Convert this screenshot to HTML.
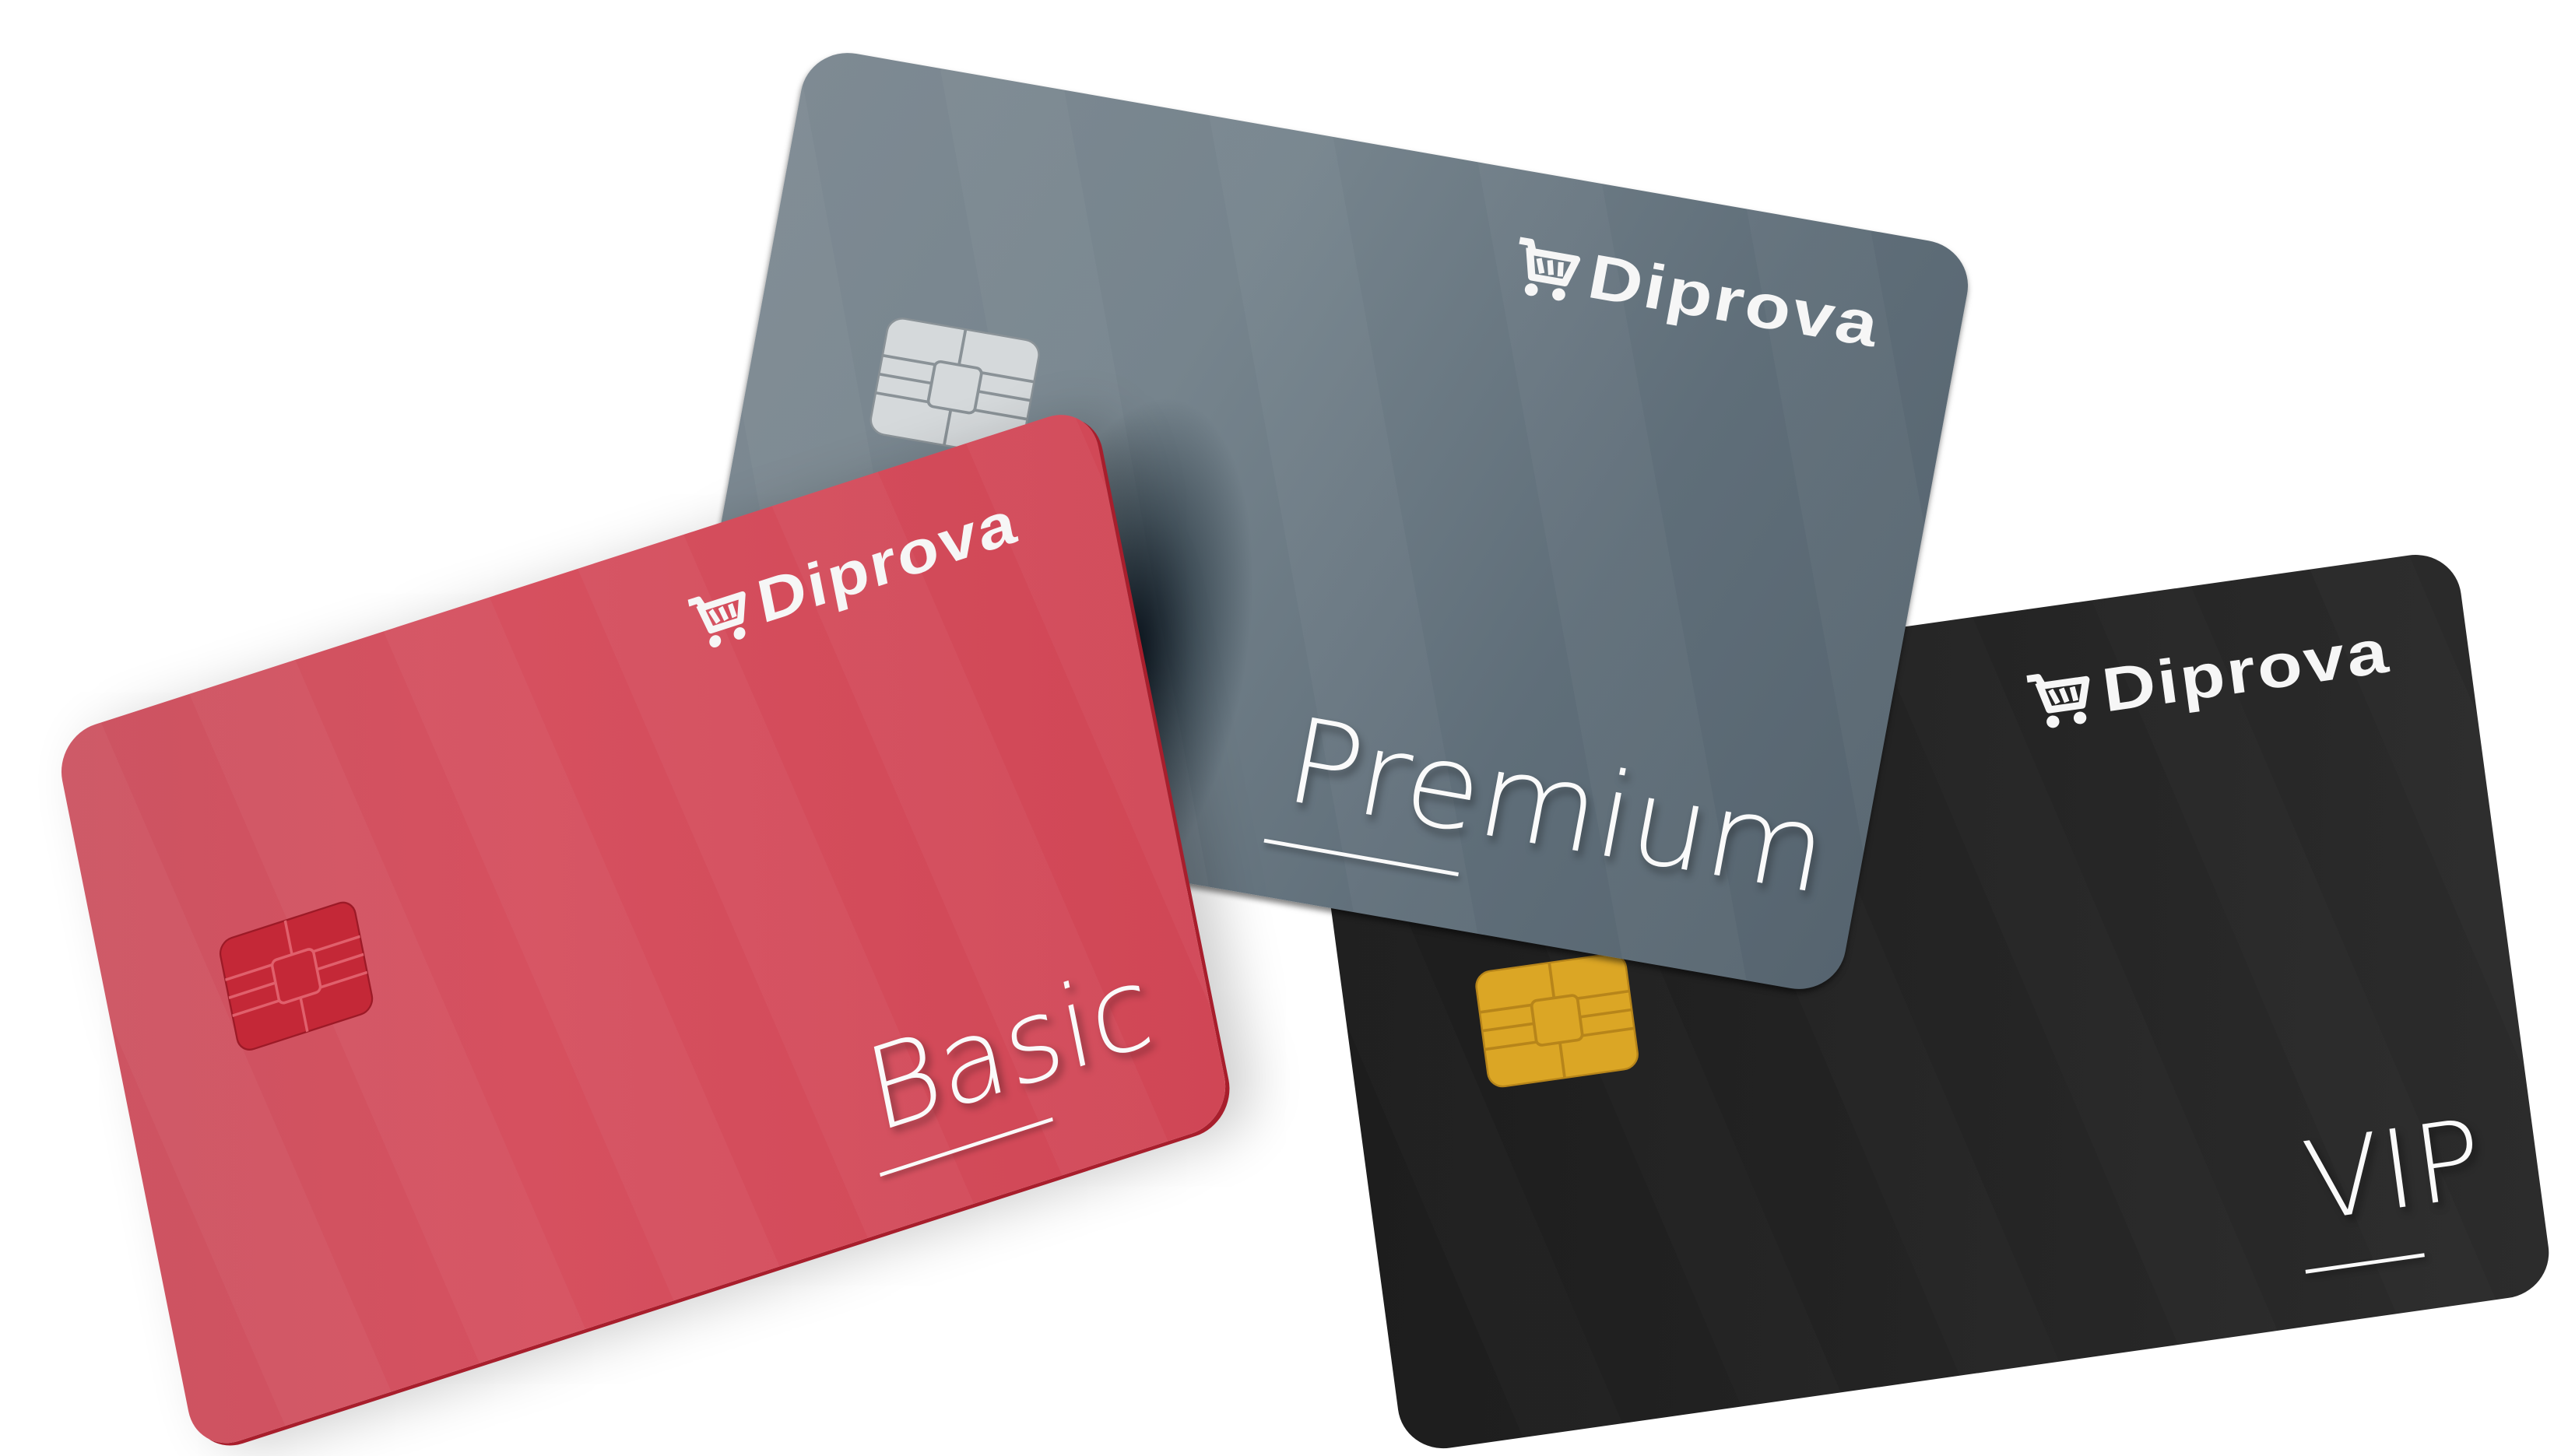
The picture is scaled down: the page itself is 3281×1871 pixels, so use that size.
<!DOCTYPE html>
<html><head><meta charset="utf-8"><style>
html,body{margin:0;padding:0;background:#fff;width:3281px;height:1871px;overflow:hidden}
#w{position:absolute;left:0;top:0;width:1568px;height:894px;transform-origin:0 0;transform:scale(2.0925,2.0928)}
.card{position:absolute;left:0;top:0;width:600px;height:400px;border-radius:24px;transform-origin:0 0;overflow:hidden}
.logo{position:absolute;left:370px;top:30px;width:200px;height:44px;color:#f6f6f6}
.logo svg{position:absolute;left:0;top:4px}
.logo span{position:absolute;left:40px;top:0px;font:bold 33px "Liberation Sans",sans-serif;letter-spacing:1px;transform:scaleX(1.15);transform-origin:0 0}
.chip{position:absolute}
.lab{position:absolute;font:36px "DejaVu Sans","Liberation Sans",sans-serif;font-weight:200;color:#fafafa;text-shadow:2px 3px 4px rgba(0,0,0,.35);white-space:nowrap}
.ul{position:absolute;height:2px;background:#fafafa;box-shadow:1px 2px 3px rgba(0,0,0,.3)}
</style></head><body><div id="w">

<!-- VIP -->
<div class="card" style="transform:matrix(1.177,-0.1667,0.1525,1.14,801,437);background:linear-gradient(100deg,#1c1c1c 0%,#222 40%,#2c2c2c 100%)">
  <div style="position:absolute;inset:0;background:repeating-linear-gradient(75deg,rgba(255,255,255,0) 0 60px,rgba(255,255,255,.015) 60px 110px)"></div>
  <div class="logo"><svg width="36" height="32" viewBox="0 0 38 34"><path d="M2 3h6l2 5h24l-4 14H12L8 6" fill="none" stroke="#f6f6f6" stroke-width="4" stroke-linejoin="round"/><path d="M14 11l3 8M20 11l2 8M26 11l1 8" stroke="#f6f6f6" stroke-width="3"/><circle cx="13" cy="29" r="3.5" fill="#f6f6f6"/><circle cx="28" cy="29" r="3.5" fill="#f6f6f6"/></svg><span>Diprova</span></div>
  <svg class="chip" style="left:68px;top:150px" width="80" height="64" viewBox="0 0 80 64"><rect x="1" y="1" width="78" height="62" rx="8" fill="#dba625" stroke="#b7851a"/><g stroke="#b7851a" stroke-width="1.5" fill="none"><rect x="28" y="20" width="24" height="24" rx="3"/><path d="M1 22h27M1 42h27M52 22h27M52 42h27M28 32H1M52 32h27M40 1v19M40 44v19"/></g></svg>
  <div class="lab" style="left:480px;top:290px;font-size:58px">VIP</div>
  <div class="ul" style="left:474px;top:370px;width:62px"></div>
</div>

<!-- Premium -->
<div class="card" style="transform:matrix(1.193,0.208,-0.2125,1.1475,497,28);background:linear-gradient(110deg,#7e8a93 0%,#76848d 35%,#5f6e79 70%,#56646f 100%);box-shadow:0 2px 3px rgba(0,0,0,.5)">
  <div style="position:absolute;inset:0;background:repeating-linear-gradient(70deg,rgba(255,255,255,0) 0 70px,rgba(255,255,255,.03) 70px 130px)"></div>
  <div style="position:absolute;inset:0;background:radial-gradient(ellipse 60px 140px at 215px 290px,rgba(0,10,20,.95),rgba(10,25,35,.45) 55%,rgba(0,0,0,0) 100%)"></div>
  <div class="logo"><svg width="36" height="32" viewBox="0 0 38 34"><path d="M2 3h6l2 5h24l-4 14H12L8 6" fill="none" stroke="#f6f6f6" stroke-width="4" stroke-linejoin="round"/><path d="M14 11l3 8M20 11l2 8M26 11l1 8" stroke="#f6f6f6" stroke-width="3"/><circle cx="13" cy="29" r="3.5" fill="#f6f6f6"/><circle cx="28" cy="29" r="3.5" fill="#f6f6f6"/></svg><span>Diprova</span></div>
  <svg class="chip" style="left:64px;top:132px" width="80" height="64" viewBox="0 0 80 64"><rect x="1" y="1" width="78" height="62" rx="8" fill="#d5d9db" stroke="#8a9297"/><g stroke="#8a9297" stroke-width="1.5" fill="none"><rect x="28" y="20" width="24" height="24" rx="3"/><path d="M1 22h27M1 42h27M52 22h27M52 42h27M28 32H1M52 32h27M40 1v19M40 44v19"/></g></svg>
  <div class="lab" style="left:305px;top:290px;font-size:62px">Premium</div>
  <div class="ul" style="left:300px;top:370px;width:100px"></div>
</div>

<!-- Basic -->
<div class="card" style="transform:matrix(1.06,-0.342,0.22,1.1,33,453);background:linear-gradient(100deg,#cc5462 0%,#d6505f 40%,#d04655 100%);box-shadow:2px 2px 0 #a81e2c,14px 6px 30px rgba(0,0,0,.2)">
  <div style="position:absolute;inset:0;background:repeating-linear-gradient(78deg,rgba(255,255,255,0) 0 50px,rgba(255,255,255,.035) 50px 110px)"></div>
  <div class="logo" style="left:358px"><svg width="36" height="32" viewBox="0 0 38 34"><path d="M2 3h6l2 5h24l-4 14H12L8 6" fill="none" stroke="#f6f6f6" stroke-width="4" stroke-linejoin="round"/><path d="M14 11l3 8M20 11l2 8M26 11l1 8" stroke="#f6f6f6" stroke-width="3"/><circle cx="13" cy="29" r="3.5" fill="#f6f6f6"/><circle cx="28" cy="29" r="3.5" fill="#f6f6f6"/></svg><span>Diprova</span></div>
  <svg class="chip" style="left:66px;top:134px" width="80" height="64" viewBox="0 0 80 64"><rect x="1" y="1" width="78" height="62" rx="8" fill="#c42837" stroke="#9c1a27"/><g stroke="#e0606c" stroke-width="1.5" fill="none"><rect x="28" y="20" width="24" height="24" rx="3"/><path d="M1 22h27M1 42h27M52 22h27M52 42h27M28 32H1M52 32h27M40 1v19M40 44v19"/></g></svg>
  <div class="lab" style="left:405px;top:288px;font-size:62px">Basic</div>
  <div class="ul" style="left:402px;top:368px;width:100px"></div>
</div>

</div></body></html>
